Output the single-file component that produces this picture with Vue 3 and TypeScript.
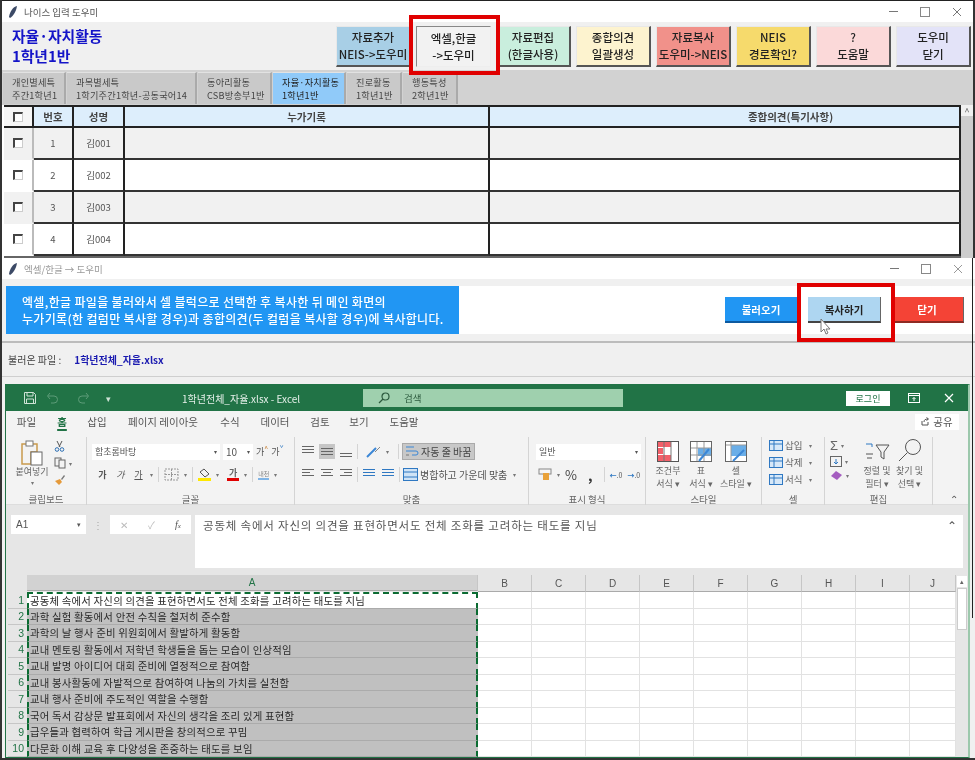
<template>
  <div class="screen">
    <!-- main window -->
    <section class="main-win">
      <div class="titlebar">
        <svg class="quill" width="12" height="14" viewBox="0 0 12 14"><path d="M10 1C6 2 3 6 2 12l1 1C6 11 9 7 10 1z" fill="#3c4a66" /></svg>
        <span class="title-text">나이스 입력 도우미</span>
        <span class="win-ctrls">
          <i class="c-min"></i><i class="c-max"></i>
          <svg width="10" height="10" viewBox="0 0 10 10"><path d="M1 1l8 8M9 1l-8 8" stroke="#777" /></svg>
        </span>
      </div>
      <div class="head">
        <h1 class="page-title">자율·자치활동<br />1학년1반</h1>
        <div class="tool-btns">
          <button v-for="b in toolButtons" :key="b.top" class="tool-btn" :class="b.cls">
            <span>{{ b.top }}</span><span>{{ b.bottom }}</span>
          </button>
        </div>
      </div>
      <div class="tabs">
        <div v-for="t in tabs" :key="t.top" class="tab" :class="{ active: t.active }" :style="{ width: t.w + 'px' }">
          <span>{{ t.top }}</span><span>{{ t.bottom }}</span>
        </div>
      </div>
      <div class="table-wrap">
        <div class="grid-table">
          <div class="hd chk-col"><span class="chk"></span></div>
          <div class="hd">번호</div>
          <div class="hd">성명</div>
          <div class="hd">누가기록</div>
          <div class="hd opinion">종합의견(특기사항)</div>
          <template v-for="n in 4" :key="n">
            <div class="cell chk-col" :class="{ odd: n % 2 }"><span class="chk"></span></div>
            <div class="cell" :class="{ odd: n % 2 }">{{ n }}</div>
            <div class="cell" :class="{ odd: n % 2 }">김00{{ n }}</div>
            <div class="cell" :class="{ odd: n % 2 }"></div>
            <div class="cell" :class="{ odd: n % 2 }"></div>
          </template>
        </div>
        <div class="vscroll">
          <span class="arrow">^</span>
          <div class="thumb"></div>
        </div>
      </div>
    </section>

    <!-- import window -->
    <section class="sub-win">
      <div class="titlebar sub">
        <svg class="quill" width="12" height="14" viewBox="0 0 12 14"><path d="M10 1C6 2 3 6 2 12l1 1C6 11 9 7 10 1z" fill="#3c4a66" /></svg>
        <span class="title-text">엑셀/한글 → 도우미</span>
        <span class="win-ctrls">
          <i class="c-min"></i><i class="c-max"></i>
          <svg width="10" height="10" viewBox="0 0 10 10"><path d="M1 1l8 8M9 1l-8 8" stroke="#999" /></svg>
        </span>
      </div>
      <div class="sub-top">
        <p class="banner">엑셀,한글 파일을 불러와서 셀 블럭으로 선택한 후 복사한 뒤 메인 화면의<br />누가기록(한 컬럼만 복사할 경우)과 종합의견(두 컬럼을 복사할 경우)에 복사합니다.</p>
        <div class="sub-btns">
          <button class="sub-btn load">불러오기</button>
          <button class="sub-btn copy">복사하기</button>
          <button class="sub-btn close">닫기</button>
        </div>
      </div>
      <div class="file-row">
        <span class="file-label">불러온 파일 :</span>
        <span class="file-name">1학년전체_자율.xlsx</span>
      </div>

      <!-- excel -->
      <div class="excel">
        <div class="xl-title">
          <svg class="xl-save" width="14" height="14" viewBox="0 0 14 14" fill="none" stroke="#cfe3d6"><path d="M1.5 1.5h9l2 2v9h-11z" /><path d="M4 1.5v3.5h6V1.500M3.500 12.500V8h7v4.500" /></svg>
          <svg class="xl-undo" width="44" height="12" viewBox="0 0 44 12" fill="none" stroke="#5d9c78"><path d="M2 4h6a3.500 3.500 0 0 1 0 7H5M4 1L1.500 4 4 7" /><path d="M42 4h-6a3.500 3.500 0 0 0 0 7h3M40 1l2.500 3L40 7" /></svg>
          <span class="xl-qat">▾</span>
          <span class="xl-name">1학년전체_자율.xlsx - Excel</span>
          <div class="xl-search">
            <svg width="12" height="12" viewBox="0 0 12 12" fill="none" stroke="#2c5a3e" stroke-width="1.200"><circle cx="7.500" cy="4.500" r="3.500" /><path d="M5 7l-4 4" /></svg>
            <span>검색</span>
          </div>
          <span class="xl-login">로그인</span>
          <svg class="xl-disp" width="12" height="10" viewBox="0 0 12 10" fill="none" stroke="#fff"><rect x=".5" y=".5" width="11" height="9" /><path d="M.5 2.500h11M6 8V4.500M4.500 6L6 4.500 7.500 6" /></svg>
          <svg class="xl-x" width="10" height="10" viewBox="0 0 10 10"><path d="M1 1l8 8M9 1l-8 8" stroke="#fff" stroke-width="1.200" /></svg>
        </div>
        <div class="xl-tabs">
          <span v-for="t in ribbonTabs" :key="t.name" :class="{ cur: t.name === '홈' }" :style="{ width: t.w + 'px' }">{{ t.name }}</span>
          <span class="share">
            <svg width="9" height="9" viewBox="0 0 9 9" fill="none" stroke="#555"><path d="M1 4v4h6V5M3 5c0-2 1-3 4-3M5.500 .5L7.500 2 5.500 3.500" /></svg>
            공유
          </span>
        </div>

        <div class="ribbon">
          <!-- clipboard -->
          <div class="group g-clip">
            <div class="g-body clip-body">
              <div class="paste">
                <svg width="24" height="26" viewBox="0 0 24 26" fill="none"><path d="M2 4h15v8h-6v12H2z" stroke="#c99a4e" stroke-width="1.500" /><rect x="6" y="1" width="7" height="5" fill="#fff" stroke="#777" /><rect x="11" y="12" width="11" height="13" fill="#fff" stroke="#666" /></svg>
                <span>붙여넣기</span>
                <span class="tiny">▾</span>
              </div>
              <div class="clip-tools">
                <svg width="11" height="12" viewBox="0 0 11 12" fill="none" stroke="#555"><path d="M3 1l3 6M8 1L5 7" /><circle cx="3" cy="9.500" r="1.800" stroke="#2d6fb3" /><circle cx="8" cy="9.500" r="1.800" stroke="#2d6fb3" /></svg>
                <span class="row-ic">
                  <svg width="12" height="12" viewBox="0 0 12 12" fill="none" stroke="#666"><rect x="1" y="1" width="6" height="8" /><rect x="5" y="3" width="6" height="8" fill="#f3f3f3" /></svg>
                  <span class="tiny">▾</span>
                </span>
                <svg width="12" height="12" viewBox="0 0 12 12"><path d="M1 7l5-2 2 3-3 3z" fill="#e59a3a" /><path d="M7 5l3-4 1 1-3 4z" fill="#777" /></svg>
              </div>
            </div>
            <div class="g-label">클립보드</div>
          </div>
          <!-- font -->
          <div class="group g-font">
            <div class="g-body col">
              <div class="frow">
                <span class="sel font-sel">함초롬바탕<em>▾</em></span>
                <span class="sel size-sel">10<em>▾</em></span>
                <span class="fs-a">가<sup>^</sup></span>
                <span class="fs-a">가<sup class="blue">ˇ</sup></span>
              </div>
              <div class="frow second">
                <b class="ft">가</b><i class="ft">가</i><u class="ft">가</u><span class="tiny">▾</span>
                <span class="vsep"></span>
                <svg width="15" height="13" viewBox="0 0 15 13" fill="none" stroke="#999" stroke-dasharray="2 1"><rect x="1" y="1" width="13" height="11" /><path d="M7.500 1v11M1 6.500h13" /></svg>
                <span class="tiny">▾</span>
                <span class="vsep"></span>
                <span class="fill-ic"><svg width="13" height="10" viewBox="0 0 13 10" fill="none" stroke="#555"><path d="M6 1l5 5-4 3-5-5z" /></svg></span>
                <span class="tiny">▾</span>
                <span class="color-a">가</span>
                <span class="tiny">▾</span>
                <span class="vsep"></span>
                <span class="phon">내천</span>
                <span class="tiny">▾</span>
              </div>
            </div>
            <div class="g-label">글꼴</div>
          </div>
          <!-- alignment -->
          <div class="group g-align">
            <div class="g-body col">
              <div class="frow">
                <span class="al"><i></i><i></i><i></i></span>
                <span class="al on mid"><i></i><i></i><i></i></span>
                <span class="al low"><i></i><i></i></span>
                <span class="vsep"></span>
                <svg class="orient" width="18" height="14" viewBox="0 0 18 14" fill="none"><path d="M2 12L11 3" stroke="#3b87d6" stroke-width="2" /><path d="M10 7l5-5" stroke="#888" /></svg>
                <span class="tiny">▾</span>
                <span class="vsep wide"></span>
                <span class="wrap-btn"><svg width="14" height="13" viewBox="0 0 14 13" fill="none"><path d="M1 2h8M1 6h10a2 2 0 0 1 0 4H7" stroke="#3b87d6" /><path d="M1 10h3" stroke="#777" /></svg>자동 줄 바꿈</span>
              </div>
              <div class="frow">
                <span class="al"><i></i><i class="s"></i><i></i></span>
                <span class="al c"><i></i><i class="s"></i><i></i></span>
                <span class="al r"><i></i><i class="s"></i><i></i></span>
                <span class="vsep"></span>
                <span class="al ind"><i></i><i></i><i></i></span>
                <span class="al ind"><i></i><i></i><i></i></span>
                <span class="vsep"></span>
                <span class="merge"><svg width="15" height="13" viewBox="0 0 15 13" fill="#cfe3f6" stroke="#2f78c2"><rect x=".5" y=".5" width="14" height="12" /><path d="M.5 4h14M.5 9h14" /></svg>병합하고 가운데 맞춤</span>
                <span class="tiny">▾</span>
              </div>
            </div>
            <div class="g-label">맞춤</div>
          </div>
          <!-- number -->
          <div class="group g-num">
            <div class="g-body col">
              <div class="frow"><span class="sel num-sel">일반<em>▾</em></span></div>
              <div class="frow second num-row">
                <svg width="14" height="13" viewBox="0 0 14 13"><rect x="1" y="1" width="12" height="5" fill="#f6f6f6" stroke="#888" /><rect x="5" y="5" width="6" height="7" fill="#e9a23b" /></svg>
                <span class="tiny">▾</span>
                <span class="pct">%</span>
                <span class="comma">,</span>
                <span class="vsep"></span>
                <span class="dec"><b>←</b>.0</span>
                <span class="dec"><b>→</b>.0</span>
              </div>
            </div>
            <div class="g-label">표시 형식</div>
          </div>
          <!-- styles -->
          <div class="group g-style">
            <div class="g-body style-body">
              <div class="st">
                <svg width="22" height="21" viewBox="0 0 22 21"><rect x=".5" y=".5" width="21" height="20" fill="#fff" stroke="#555" /><rect x="1" y="1" width="13" height="5" fill="#f2606a" /><rect x="1" y="7" width="5" height="6" fill="#f2606a" /><rect x="1" y="14" width="13" height="6" fill="#f2606a" /><path d="M14 1v19M7 1v19" stroke="#777" /></svg>
                <span>조건부<br />서식 ▾</span>
              </div>
              <div class="st">
                <svg width="22" height="21" viewBox="0 0 22 21"><rect x=".5" y=".5" width="21" height="20" fill="#fff" stroke="#666" /><rect x="8" y="7" width="13" height="8" fill="#6aaee8" /><path d="M7 1v19M14 1v19M1 7h20M1 14h20" stroke="#999" /><path d="M9 20l10-12" stroke="#3b87d6" stroke-width="2" /></svg>
                <span>표<br />서식 ▾</span>
              </div>
              <div class="st">
                <svg width="22" height="21" viewBox="0 0 22 21"><rect x=".5" y=".5" width="21" height="20" fill="#fff" stroke="#666" /><rect x="6" y="4" width="15" height="11" fill="#6aaee8" /><path d="M6 1v19M1 4h20" stroke="#999" /><path d="M8 20l11-11" stroke="#3b87d6" stroke-width="2" /></svg>
                <span>셀<br />스타일 ▾</span>
              </div>
            </div>
            <div class="g-label">스타일</div>
          </div>
          <!-- cells -->
          <div class="group g-cells">
            <div class="g-body col cells-body">
              <div v-for="c in cellOps" :key="c" class="cell-op">
                <svg width="14" height="11" viewBox="0 0 14 11" fill="#d7e8f8" stroke="#2f78c2"><rect x=".5" y=".5" width="13" height="10" /><path d="M.5 4h13M5 .5v10" /></svg>
                <span>{{ c }}</span><span class="tiny">▾</span>
              </div>
            </div>
            <div class="g-label">셀</div>
          </div>
          <!-- editing -->
          <div class="group g-edit">
            <div class="g-body edit-body">
              <div class="ed-left">
                <span class="row-ic"><span class="sigma">Σ</span><span class="tiny">▾</span></span>
                <span class="row-ic"><svg width="12" height="11" viewBox="0 0 12 11" fill="none" stroke="#666"><rect x=".5" y=".5" width="11" height="10" /><path d="M6 3v5M4 6l2 2 2-2" stroke="#2f78c2" /></svg><span class="tiny">▾</span></span>
                <span class="row-ic"><svg width="13" height="11" viewBox="0 0 13 11"><path d="M1 6l5-5 6 4-5 5z" fill="#a45dc0" /></svg><span class="tiny">▾</span></span>
              </div>
              <div class="st ed-st">
                <svg width="26" height="20" viewBox="0 0 26 20" fill="none" stroke="#555"><path d="M2 2h6v3" stroke="#2f78c2" /><path d="M2 12h7M3 16h5" /><path d="M12 3h13l-5 7v7l-3-2v-5z" /></svg>
                <span>정렬 및<br />필터 ▾</span>
              </div>
              <div class="st ed-st">
                <svg width="24" height="24" viewBox="0 0 24 24" fill="none" stroke="#555"><circle cx="15" cy="9" r="7.500" /><path d="M9.500 14.500L1 23" /></svg>
                <span>찾기 및<br />선택 ▾</span>
              </div>
            </div>
            <div class="g-label">편집</div>
          </div>
          <span class="collapse">⌃</span>
        </div>

        <div class="formula">
          <div class="name-box"><span>A1</span><em>▾</em></div>
          <span class="dots">⋮</span>
          <div class="fx-box"><span>✕</span><span>✓</span><i>f<small>x</small></i></div>
          <div class="fx-input">
            <span>{{ rows[0] }}</span>
            <em>⌃</em>
          </div>
        </div>

        <div class="sheet-wrap">
          <div class="sheet">
            <div class="corner"></div>
            <div v-for="c in columns" :key="c" class="col-head" :class="{ sel: c === 'A' }">{{ c }}</div>
            <template v-for="(r, i) in rows" :key="i">
              <div class="row-head">{{ i + 1 }}</div>
              <div class="a-cell" :class="{ first: i === 0 }">{{ r }}</div>
              <div v-for="c in columns.slice(1)" :key="c" class="x-cell"></div>
            </template>
          </div>
          <div class="xl-scroll">
            <span class="up">▴</span>
            <div class="xl-thumb"></div>
          </div>
        </div>
      </div>
    </section>

    <!-- annotation boxes and pointer on top of the screenshot -->
    <div class="mark mark-top"></div>
    <div class="mark mark-copy"></div>
    <svg class="pointer" width="12" height="17" viewBox="0 0 12 17"><path d="M1 1v13l3-3 2 5 2-1-2-4h4z" fill="#fff" stroke="#777" /></svg>
    <div class="frame-line"></div>
  </div>
</template>

<script setup lang="ts">
interface ToolButton {
  top: string
  bottom: string
  cls: string
}

const toolButtons: ToolButton[] = [
  { top: '자료추가', bottom: 'NEIS->도우미', cls: 'b-blue' },
  { top: '엑셀,한글', bottom: '->도우미', cls: 'b-sunken' },
  { top: '자료편집', bottom: '(한글사용)', cls: 'b-green' },
  { top: '종합의견', bottom: '일괄생성', cls: 'b-cream' },
  { top: '자료복사', bottom: '도우미->NEIS', cls: 'b-red' },
  { top: 'NEIS', bottom: '경로확인?', cls: 'b-yellow' },
  { top: '?', bottom: '도움말', cls: 'b-pink' },
  { top: '도우미', bottom: '닫기', cls: 'b-violet' }
]

const tabs = [
  { top: '개인별세특', bottom: '주간1학년1', w: 63 },
  { top: '과목별세특', bottom: '1학기주간1학년-공동국어14', w: 130 },
  { top: '동아리활동', bottom: 'CSB방송부1반', w: 74 },
  { top: '자율·자치활동', bottom: '1학년1반', w: 73, active: true },
  { top: '진로활동', bottom: '1학년1반', w: 55 },
  { top: '행동특성', bottom: '2학년1반', w: 55 }
]

const ribbonTabs = [
  { name: '파일', w: 41 },
  { name: '홈', w: 30 },
  { name: '삽입', w: 40 },
  { name: '페이지 레이아웃', w: 92 },
  { name: '수식', w: 42 },
  { name: '데이터', w: 48 },
  { name: '검토', w: 42 },
  { name: '보기', w: 36 },
  { name: '도움말', w: 54 }
]

const cellOps = ['삽입', '삭제', '서식']
const columns = ['A', 'B', 'C', 'D', 'E', 'F', 'G', 'H', 'I', 'J']

const rows = [
  '공동체 속에서 자신의 의견을 표현하면서도 전체 조화를 고려하는 태도를 지님',
  '과학 실험 활동에서 안전 수칙을 철저히 준수함',
  '과학의 날 행사 준비 위원회에서 활발하게 활동함',
  '교내 멘토링 활동에서 저학년 학생들을 돕는 모습이 인상적임',
  '교내 발명 아이디어 대회 준비에 열정적으로 참여함',
  '교내 봉사활동에 자발적으로 참여하여 나눔의 가치를 실천함',
  '교내 행사 준비에 주도적인 역할을 수행함',
  '국어 독서 감상문 발표회에서 자신의 생각을 조리 있게 표현함',
  '급우들과 협력하여 학급 게시판을 창의적으로 꾸밈',
  '다문화 이해 교육 후 다양성을 존중하는 태도를 보임'
]
</script>

<style>
html,
body {
  margin: 0;
  background: #fff;
  overflow: hidden;
}
</style>

<style scoped>
.screen {
  position: relative;
  width: 975px;
  height: 760px;
  box-sizing: border-box;
  overflow: hidden;
  background: #fff;
  border-left: 2px solid #333;
  border-bottom: 2px solid #333;
  font-family: "Noto Sans CJK KR", "Noto Sans", sans-serif;
  color: #333;
  filter: blur(0.4px);
}

button {
  font-family: inherit;
  padding: 0;
  cursor: pointer;
}

.main-win {
  height: 258px;
  box-sizing: border-box;
  border-top: 1px solid #222;
  border-right: 2px solid #333;
  display: flex;
  flex-direction: column;
  background: #d2d2d2;
}

.titlebar {
  height: 21px;
  flex: none;
  background: #fff;
  display: flex;
  align-items: center;
  padding-left: 5px;
  gap: 5px;
}

.title-text {
  font-size: 9.500px;
  color: #555;
}

.titlebar.sub .title-text {
  color: #999;
}

.win-ctrls {
  margin-left: auto;
  margin-right: 11px;
  display: flex;
  align-items: center;
  gap: 22px;
}

.titlebar.sub .win-ctrls {
  margin-right: 12px;
}

.c-min {
  width: 9px;
  height: 1px;
  background: #777;
}

.c-max {
  width: 8px;
  height: 8px;
  border: 1px solid #888;
}

.head {
  height: 48px;
  flex: none;
  background: #f0f0f0;
  display: flex;
  justify-content: space-between;
  padding: 4px 2px 0 10px;
  box-sizing: border-box;
}

.page-title {
  margin: 0;
  font-size: 14.800px;
  line-height: 20px;
  font-weight: 700;
  color: #1414c8;
}

.tool-btns {
  display: flex;
  gap: 5px;
}

.tool-btn {
  width: 75px;
  height: 41px;
  box-sizing: border-box;
  border: 0;
  border-top: 1px solid #e8e8e8;
  border-left: 1px solid #e8e8e8;
  border-right: 2px solid #555;
  border-bottom: 2px solid #555;
  display: flex;
  flex-direction: column;
  align-items: center;
  justify-content: center;
  font-size: 11.500px;
  line-height: 17px;
  font-weight: 500;
  color: #222;
  white-space: nowrap;
  overflow: hidden;
}

.b-blue { background: #a8cfe6; }
.b-sunken {
  background: #f2f2f2;
  border: 1px solid #888;
  border-right-color: #eee;
  border-bottom-color: #eee;
}
.b-green { background: #c9eedd; }
.b-cream { background: #fdf3cf; }
.b-red { background: #f1918a; }
.b-yellow { background: #f6da6c; }
.b-pink { background: #fbd9d9; }
.b-violet { background: #e3e3f8; }

.tabs {
  height: 35px;
  flex: none;
  display: flex;
  gap: 1px;
  padding: 2px 0 0 1px;
  box-sizing: border-box;
}

.tab {
  height: 32px;
  box-sizing: border-box;
  background: #c9c9c9;
  border-right: 2px solid #aaa;
  border-top: 1px solid #e2e2e2;
  padding-left: 9px;
  display: flex;
  flex-direction: column;
  justify-content: center;
  font-size: 9.200px;
  letter-spacing: 0.200px;
  line-height: 13px;
  color: #444;
  white-space: nowrap;
  overflow: hidden;
}

.tab.active {
  background: #90caf9;
  color: #222;
}

.table-wrap {
  flex: 1;
  display: flex;
  background: #fff;
  overflow: hidden;
  min-height: 0;
}

.grid-table {
  flex: 1;
  margin-left: 2px;
  display: grid;
  grid-template-columns: 30px 40px 51px 365px 1fr;
  grid-template-rows: 21px 32px 32px 32px 32px;
  border-top: 2px solid #222;
  border-bottom: 2px solid #666;
  min-width: 0;
}

.hd {
  background: #ddeefc;
  border-right: 2px solid #222;
  border-bottom: 2px solid #222;
  display: flex;
  align-items: center;
  justify-content: center;
  font-size: 10.500px;
  font-weight: 700;
  color: #444;
}

.hd.opinion {
  padding-left: 132px;
}

.hd.chk-col {
  background: #f6f6f6;
}

.cell {
  background: #fff;
  border-right: 2px solid #222;
  border-bottom: 2px solid #333;
  display: flex;
  align-items: center;
  justify-content: center;
  font-size: 9.500px;
  color: #555;
}

.cell.odd {
  background: #f1f1f1;
}

.cell.chk-col {
  border-right: 2px solid #bbb;
  border-bottom-color: transparent;
}

.chk {
  width: 7px;
  height: 7px;
  background: #fff;
  border-top: 2px solid #444;
  border-left: 2px solid #444;
  border-right: 1px solid #ccc;
  border-bottom: 1px solid #ccc;
}

.vscroll {
  width: 12px;
  flex: none;
  background: #f0f0f0;
  display: flex;
  flex-direction: column;
  align-items: center;
}

.arrow {
  height: 11px;
  font-size: 9px;
  line-height: 13px;
  color: #555;
}

.thumb {
  flex: 1;
  width: 100%;
  background: #cdcdcd;
}

.sub-win {
  display: flex;
  flex-direction: column;
  height: 500px;
  background: #f0f0f0;
  padding-right: 5px;
}

.titlebar.sub {
  margin-right: -5px;
}

.sub-top {
  margin: 7px -5px 0 4px;
  height: 48px;
  flex: none;
  background: #fff;
  display: flex;
  justify-content: space-between;
  margin-bottom: 7px;
}

.banner {
  margin: 0;
  width: 453px;
  box-sizing: border-box;
  background: #2196f3;
  color: #fff;
  padding: 7px 0 0 16px;
  font-size: 12px;
  line-height: 17px;
  font-weight: 500;
  letter-spacing: 0.330px;
  white-space: nowrap;
}

.sub-btns {
  display: flex;
  gap: 10px;
  margin: 11px 11px 0 0;
}

.sub-btn {
  width: 73px;
  height: 26px;
  border: 0;
  border-bottom: 2px solid #444;
  border-right: 1px solid #666;
  font-size: 10.500px;
  font-weight: 700;
  color: #fff;
}

.load {
  background: #2196f3;
  border-bottom-color: #0d5aa0;
}

.copy {
  background: #aed6f1;
  color: #222;
}

.close {
  background: #f44336;
  border-bottom-color: #8e2a22;
}

.file-row {
  flex: none;
  height: 33px;
  margin-left: 0;
  border-top: 2px solid #bcbcbc;
  border-bottom: 1px solid #cfcfcf;
  display: flex;
  align-items: center;
  gap: 13px;
  padding-left: 6px;
  font-size: 10px;
  box-sizing: content-box;
  margin-bottom: 7px;
  margin-right: -5px;
}

.file-label {
  color: #444;
}

.file-name {
  color: #1a1ab0;
  font-weight: 700;
}

.excel {
  margin-left: 3px;
  border: 1px solid #217346;
  border-right-width: 2px;
  border-right-color: #9cc8ac;
  background: #f3f3f3;
  flex: 1;
  min-height: 0;
  display: flex;
  flex-direction: column;
}

.xl-title {
  height: 26px;
  flex: none;
  background: #217346;
  display: flex;
  align-items: center;
  padding-left: 17px;
  color: #e6f0ea;
  font-size: 9.500px;
}

.xl-undo {
  margin-left: 9px;
}

.xl-qat {
  margin-left: 16px;
  font-size: 9px;
  color: #cfe3d6;
}

.xl-name {
  margin-left: 71px;
  width: 181px;
  font-size: 10px;
}

.xl-search {
  width: 260px;
  height: 18px;
  background: #9fd0ae;
  display: flex;
  align-items: center;
  gap: 14px;
  padding-left: 15px;
  box-sizing: border-box;
  color: #2c5a3e;
}

.xl-login {
  margin-left: 223px;
  width: 44px;
  height: 15px;
  line-height: 15px;
  text-align: center;
  background: #fff;
  color: #217346;
  font-size: 9px;
}

.xl-disp {
  margin-left: 18px;
}

.xl-x {
  margin-left: 24px;
}

.xl-tabs {
  height: 21px;
  flex: none;
  display: flex;
  align-items: center;
  font-size: 10.500px;
  color: #555;
}

.xl-tabs > span {
  text-align: center;
  white-space: nowrap;
  flex: none;
}

.xl-tabs .cur {
  color: #217346;
  font-weight: 700;
  text-decoration: underline;
  text-underline-offset: 3px;
  text-decoration-thickness: 2px;
}

.xl-tabs .share {
  margin-left: auto;
  margin-right: 9px;
  width: 44px;
  height: 16px;
  background: #fff;
  display: flex;
  align-items: center;
  justify-content: center;
  gap: 3px;
}

.ribbon {
  position: relative;
  height: 73px;
  flex: none;
  display: flex;
  font-size: 8.500px;
  color: #666;
  border-bottom: 1px solid #ddd;
  box-sizing: border-box;
}

.group {
  flex: none;
  box-sizing: border-box;
  border-right: 1px solid #d4d4d4;
  height: 68px;
  margin-top: 5px;
  display: flex;
  flex-direction: column;
}

.g-body {
  flex: 1;
  min-height: 0;
}

.g-body.col {
  display: flex;
  flex-direction: column;
  gap: 6px;
  padding: 6px 0 0 5px;
}

.g-label {
  height: 11px;
  line-height: 11px;
  text-align: center;
  font-size: 9.500px;
  color: #666;
}

.g-clip { width: 81px; }
.g-font { width: 208px; }
.g-align { width: 234px; }
.g-num { width: 117px; }
.g-style { width: 116px; }
.g-cells { width: 63px; }
.g-edit { width: 108px; }

.clip-body {
  display: flex;
  gap: 4px;
  padding: 3px 0 0 8px;
}

.paste {
  display: flex;
  flex-direction: column;
  align-items: center;
  width: 36px;
  font-size: 9px;
  line-height: 11px;
}

.clip-tools {
  display: flex;
  flex-direction: column;
  gap: 5px;
}

.row-ic {
  display: flex;
  align-items: center;
  gap: 3px;
}

.tiny {
  font-size: 6px;
  color: #777;
  flex: none;
}

.frow {
  display: flex;
  align-items: center;
  gap: 3px;
  height: 17px;
  white-space: nowrap;
}

.frow.second {
  gap: 5px;
  padding-left: 4px;
}

.sel {
  background: #fff;
  height: 16px;
  display: flex;
  align-items: center;
  justify-content: space-between;
  padding: 0 3px;
  box-sizing: border-box;
  font-size: 9px;
  color: #555;
}

.sel em {
  font-size: 6px;
  font-style: normal;
}

.font-sel { width: 128px; }
.size-sel { width: 30px; font-size: 10px; }
.num-sel { width: 105px; margin-left: 2px; }

.fs-a {
  font-size: 9px;
  color: #555;
}

.fs-a sup {
  font-size: 7px;
  line-height: 0;
  color: #c67a2a;
}

.fs-a sup.blue {
  color: #2f78c2;
}

.ft {
  font-size: 9px;
  color: #555;
  width: 13px;
  text-align: center;
}

.vsep {
  width: 1px;
  height: 15px;
  background: #d4d4d4;
  flex: none;
}

.vsep.wide {
  margin-left: 6px;
}

.orient {
  margin-left: 4px;
}

.fill-ic {
  border-bottom: 3px solid #ffe800;
  line-height: 0;
}

.color-a {
  font-size: 9px;
  font-weight: 700;
  border-bottom: 3px solid #e00000;
  line-height: 10px;
  padding: 0 2px;
  margin-left: 3px;
}

.phon {
  font-size: 6px;
  color: #888;
  border-bottom: 2px solid #7fb4e6;
}

.al {
  width: 16px;
  height: 15px;
  box-sizing: border-box;
  display: flex;
  flex-direction: column;
  justify-content: flex-start;
  gap: 2px;
  padding: 2px;
  flex: none;
}

.al i {
  height: 1px;
  background: #666;
}

.al.on {
  background: #c6c6c6;
}

.al.mid {
  justify-content: center;
}

.al.low {
  justify-content: flex-end;
}

.al i.s {
  width: 70%;
}

.al.c i.s {
  align-self: center;
}

.al.r i.s {
  align-self: flex-end;
}

.al.ind i {
  background: #2f78c2;
}

.wrap-btn {
  display: flex;
  align-items: center;
  gap: 2px;
  width: 73px;
  height: 17px;
  background: #c8c8c8;
  border: 1px solid #aaa;
  box-sizing: border-box;
  padding-left: 2px;
  font-size: 10px;
  color: #444;
}

.merge {
  display: flex;
  align-items: center;
  gap: 2px;
  font-size: 10px;
  color: #555;
  width: 107px;
  flex: none;
}

.num-row {
  gap: 6px;
  padding-left: 2px;
}

.pct {
  font-size: 13px;
  color: #444;
}

.comma {
  font-size: 14px;
  font-weight: 700;
  line-height: 8px;
  color: #333;
  margin: 0 6px;
}

.dec {
  font-size: 7px;
  color: #555;
  white-space: nowrap;
}

.dec b {
  color: #2f78c2;
}

.style-body {
  display: grid;
  grid-template-columns: 34px 32px 38px;
  padding: 4px 0 0 5px;
}

.st {
  display: flex;
  flex-direction: column;
  align-items: center;
  text-align: center;
  gap: 2px;
  line-height: 13px;
  font-size: 9px;
  white-space: nowrap;
}

.g-body.cells-body {
  gap: 3px;
  padding: 1px 0 0 7px;
}

.cell-op {
  display: flex;
  align-items: center;
  gap: 2px;
  height: 14px;
  font-size: 9.500px;
}

.cell-op .tiny {
  margin-left: 5px;
}

.edit-body {
  display: grid;
  grid-template-columns: 31px 32px 33px;
  padding: 1px 0 0 5px;
}

.ed-left {
  display: flex;
  flex-direction: column;
  gap: 3px;
}

.sigma {
  font-size: 13px;
  line-height: 15px;
  color: #666;
  font-family: "Liberation Sans", sans-serif;
}

.ed-st {
  justify-content: flex-end;
  padding-bottom: 5px;
}

.collapse {
  position: absolute;
  right: 10px;
  bottom: -2px;
  font-size: 10px;
  color: #555;
}

.formula {
  height: 70px;
  flex: none;
  background: #e6e6e6;
  display: flex;
  align-items: flex-start;
  padding: 10px 5px 0 5px;
  box-sizing: border-box;
  font-size: 10px;
}

.name-box {
  width: 75px;
  height: 19px;
  background: #fff;
  display: flex;
  align-items: center;
  justify-content: space-between;
  padding: 0 5px;
  box-sizing: border-box;
  font-family: "Liberation Sans", sans-serif;
  color: #555;
}

.name-box em {
  font-size: 7px;
  font-style: normal;
}

.dots {
  width: 24px;
  text-align: center;
  line-height: 19px;
  color: #aaa;
}

.fx-box {
  width: 81px;
  height: 19px;
  background: #fff;
  display: flex;
  align-items: center;
  justify-content: space-around;
  color: #bbb;
  font-size: 10px;
}

.fx-box i {
  color: #555;
  font-family: "Liberation Serif", serif;
}

.fx-box small {
  font-size: 7px;
}

.fx-input {
  margin-left: 4px;
  flex: 1;
  height: 53px;
  background: #fff;
  display: flex;
  justify-content: space-between;
  padding: 2px 6px 0 8px;
  box-sizing: border-box;
  font-size: 11.500px;
  color: #555;
  letter-spacing: 0.800px;
  white-space: nowrap;
}

.fx-input em {
  font-style: normal;
  letter-spacing: 0;
}

.sheet-wrap {
  flex: 1;
  min-height: 0;
  display: flex;
  background: #e6e6e6;
  padding-left: 2px;
  overflow: hidden;
}

.sheet {
  display: grid;
  grid-template-columns: 19px 451px repeat(8, 54px) 46px;
  grid-template-rows: 17px;
  grid-auto-rows: 16.500px;
  flex: none;
}

.corner {
  background: #e6e6e6;
}

.col-head {
  background: #e6e6e6;
  border-right: 1px solid #c6c6c6;
  border-bottom: 1px solid #aaa;
  display: flex;
  align-items: center;
  justify-content: center;
  font-family: "Liberation Sans", sans-serif;
  font-size: 10px;
  color: #555;
}

.col-head.sel {
  background: #d2d2d2;
  color: #217346;
}

.row-head {
  background: #e6e6e6;
  border-bottom: 1px solid #c6c6c6;
  display: flex;
  align-items: center;
  justify-content: flex-end;
  padding-right: 3px;
  font-family: "Liberation Sans", sans-serif;
  font-size: 10.500px;
  color: #217346;
}

.a-cell {
  box-sizing: border-box;
  background: #c0c0c0;
  border-left: 2px dashed #0b6b32;
  border-right: 2px dashed #0b6b32;
  border-bottom: 1px solid #ababab;
  padding-left: 1px;
  font-size: 10.400px;
  line-height: 15px;
  letter-spacing: 0.200px;
  color: #2a2a2a;
  white-space: nowrap;
  overflow: hidden;
}

.a-cell.first {
  background: #fff;
  border-top: 2px dashed #0b6b32;
  line-height: 13px;
}

.x-cell {
  background: #fff;
  border-right: 1px solid #e2e2e2;
  border-bottom: 1px solid #e2e2e2;
}

.xl-scroll {
  flex: 1;
  min-width: 0;
  display: flex;
  flex-direction: column;
  align-items: center;
  padding-top: 1px;
  background: #e6e6e6;
}

.up {
  width: 10px;
  height: 11px;
  background: #fff;
  font-size: 7px;
  line-height: 11px;
  text-align: center;
  color: #666;
}

.xl-thumb {
  width: 10px;
  height: 42px;
  margin-top: 1px;
  background: #fff;
  border: 1px solid #ccc;
  box-sizing: border-box;
}

.mark {
  position: absolute;
  box-sizing: border-box;
  border: 4px solid #e00000;
}

.mark-top {
  left: 407px;
  top: 15px;
  width: 91px;
  height: 60px;
}

.mark-copy {
  left: 795px;
  top: 283px;
  width: 98px;
  height: 59px;
}

.pointer {
  position: absolute;
  left: 818px;
  top: 318px;
}

.frame-line {
  position: absolute;
  left: 970px;
  top: 258px;
  width: 1px;
  height: 360px;
  background: #222;
}
</style>
